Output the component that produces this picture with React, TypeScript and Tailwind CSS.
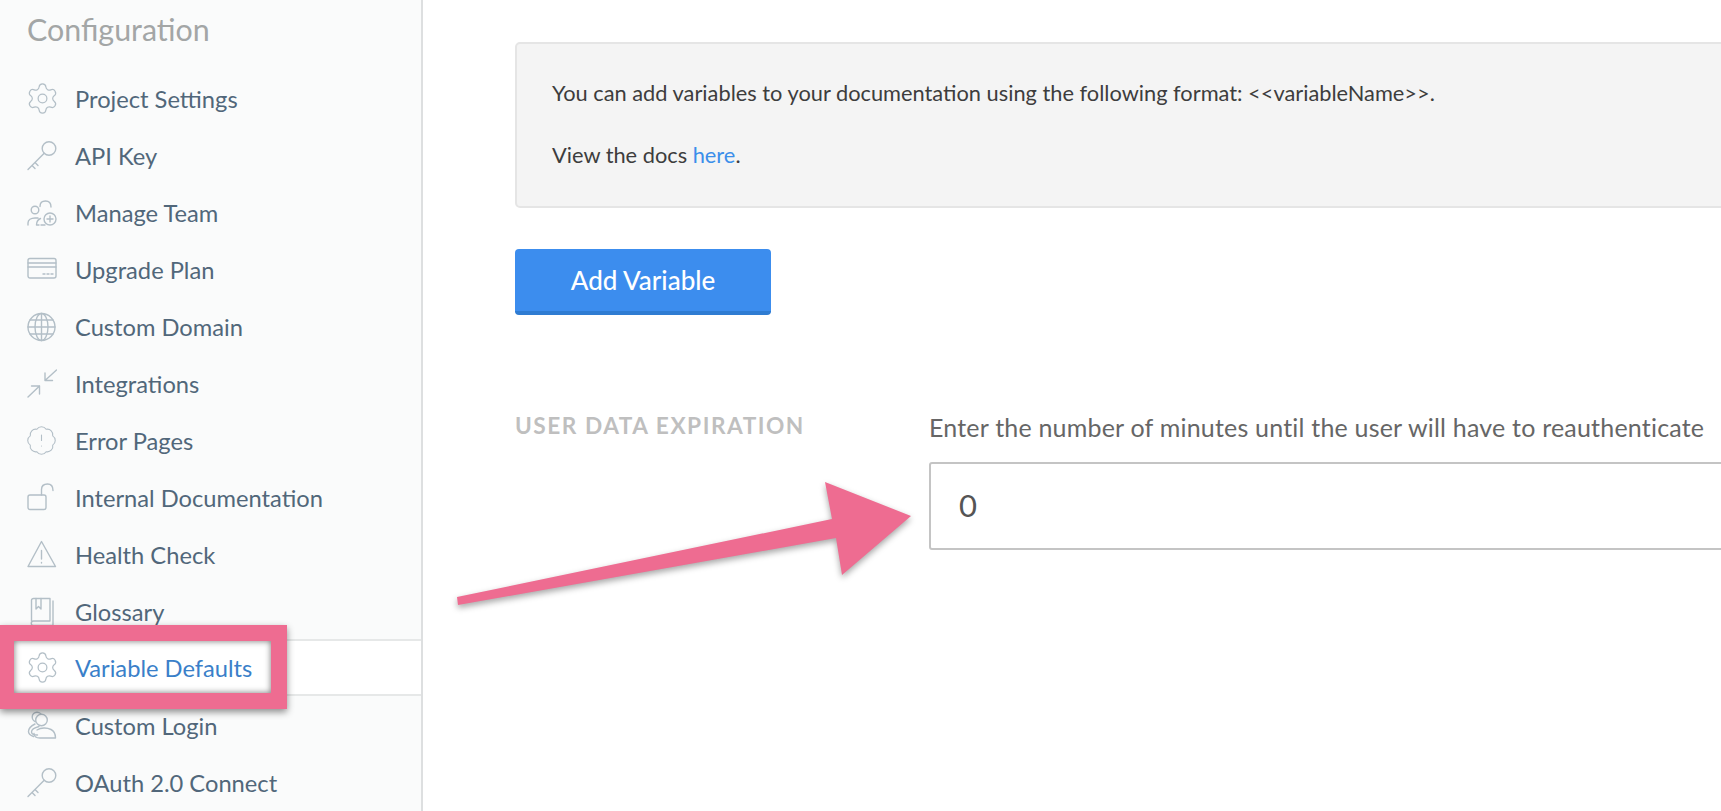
import React from "react";
import { Settings, BadgeAlert } from "lucide-react";

const ic = "#b3bfc7";

function Svg({ children }: { children: React.ReactNode }) {
  return (
    <svg width="30" height="30" viewBox="0 0 30 30" fill="none" stroke={ic} strokeWidth="1.4" strokeLinecap="round" strokeLinejoin="round" className="shrink-0">
      {children}
    </svg>
  );
}

const Gear = () => <Settings size={35} strokeWidth={0.85} color={ic} className="shrink-0 -mx-[2.5px]" />;
const Key = () => (
  <Svg>
    <circle cx="22" cy="7.5" r="6.8" />
    <path d="M17.2 12.3 1 28.5M5 24.500l3 3M8 21.500l3 3" />
  </Svg>
);
const Team = () => (
  <Svg>
    <circle cx="8" cy="12" r="3.8" />
    <path d="M1 27v-2c0-3 3-5 7-5h3M12 27H9.500c0-3.500 1.500-5.500 4-6.500M13 8.500C13 4 16 3 18.500 3S24 4.500 24 9M14 27h4" />
    <circle cx="23" cy="21" r="6" />
    <path d="M23 18v6M20 21h6" />
  </Svg>
);
const Card = () => (
  <Svg>
    <rect x="1" y="3.5" width="28" height="19.5" rx="2" />
    <path d="M1 8h28M1 12h28M16 19h2M20 19h2M24 19h2" />
  </Svg>
);
const Globe = () => (
  <Svg>
    <circle cx="14.5" cy="15" r="13.5" />
    <ellipse cx="14.5" cy="15" rx="6.5" ry="13.5" />
    <path d="M14.500 1.500v27M1 15h27M3 8h23M3 22h23" />
  </Svg>
);
const Arrows = () => (
  <Svg>
    <path d="M29.500 1 18 11.500M18 4v7.500h7.500M1 28l11.500-11M4.500 17h8v8" />
  </Svg>
);
const ErrorIcon = () => <BadgeAlert size={33} strokeWidth={0.8} color={ic} className="shrink-0 -mx-[1.5px] -translate-x-[1px]" />;
const Lock = () => (
  <Svg>
    <rect x="1" y="12" width="18" height="14.5" rx="2" />
    <path d="M14.500 12V6.500C14.500 3 17 1 20.500 1S26 3 26 7.500" />
  </Svg>
);
const Warn = () => (
  <Svg>
    <path d="M14.500 1.500 1 26.500h27.500z" />
    <path d="M14.500 10.500v8.500M14.500 22.500v.5" />
  </Svg>
);
const Book = () => (
  <Svg>
    <path d="M4.500 24V3.500a2 2 0 0 1 2-2H23v22.500H6.500a2 2 0 0 0 0 4.500H26V4" />
    <path d="M9 1.500v10.500l2.500-2.500L14 12V1.500" />
  </Svg>
);
const Login = () => (
  <Svg>
    <circle cx="10" cy="6" r="4.8" />
    <circle cx="14.500" cy="9" r="5.800" fill="#fafbfb" />
    <path d="M8 13C4 15 1.500 18 1.500 20.500c0 2 2 4 5 5M12 15.500c-4 1-7.500 3-7.500 5.500 0 2.500 3 3 6 3" />
    <path d="M10 19c4-2.500 10-2.500 14-.5 3 1.500 4.500 4.500 4.500 8.500H13c-4 0-6.500-2-6-4.500" />
  </Svg>
);

const items: [string, () => React.ReactElement][] = [
  ["Project Settings", Gear],
  ["API Key", Key],
  ["Manage Team", Team],
  ["Upgrade Plan", Card],
  ["Custom Domain", Globe],
  ["Integrations", Arrows],
  ["Error Pages", ErrorIcon],
  ["Internal Documentation", Lock],
  ["Health Check", Warn],
  ["Glossary", Book],
];
const after: [string, () => React.ReactElement][] = [
  ["Custom Login", Login],
  ["OAuth 2.0 Connect", Key],
];

function Row({ label, Icon }: { label: string; Icon: () => React.ReactElement }) {
  return (
    <div className="flex h-[57px] items-center gap-[18px] pl-[27px] text-[#51677a]">
      <Icon />
      <span className="pt-[2px]">{label}</span>
    </div>
  );
}

export default function App() {
  return (
    <div className="relative flex h-[811px] w-[1721px] overflow-hidden bg-white font-['Lato','Liberation_Sans',sans-serif]">
      <aside className="h-full w-[423px] shrink-0 border-r-2 border-[#dddfe0] bg-[#fafbfb] text-[23.7px]">
        <div className="h-[70px] pl-[27px] pt-[10px] text-[30.4px] leading-[38px] text-[#a3a6a6]">Configuration</div>
        {items.map(([l, I]) => (
          <Row key={l} label={l} Icon={I} />
        ))}
        <div className="-mt-px mb-px flex h-[57px] items-center gap-[18px] border-y-2 border-[#e6e8e8] bg-white pl-[27px] text-[#3a7fc9]">
          <Gear />
          <span className="pt-[3px]">Variable Defaults</span>
        </div>
        {after.map(([l, I]) => (
          <Row key={l} label={l} Icon={I} />
        ))}
      </aside>

      <main className="min-w-0 flex-1 pl-[92px] pt-[42px]">
        <div className="-mr-4 flex h-[166px] flex-col gap-[34px] rounded-[5px] border-2 border-[#e5e5e5] bg-[#f4f4f4] pl-[35px] pt-[35px] text-[21.8px] leading-[28px] text-[#3d3d3d]">
          <p>You can add variables to your documentation using the following format: &lt;&lt;variableName&gt;&gt;.</p>
          <p>
            View the docs <span className="text-[#3b8eea]">here</span>.
          </p>
        </div>
        <button className="mt-[41px] block h-[66px] w-[256px] rounded-[4px] border-b-4 border-[#2f7cd2] bg-[#3c8dee] text-[26px] font-medium text-white">
          Add Variable
        </button>
        <section className="mt-[98px] flex">
          <h3 className="-mt-px h-[28px] w-[414px] shrink-0 text-[22.7px] leading-[28px] font-bold tracking-[1.5px] text-[#bfbfbf]">USER DATA EXPIRATION</h3>
          <div className="min-w-0 flex-1">
            <p className="text-[25px] leading-[28px] tracking-[0.2px] text-[#666666]">Enter the number of minutes until the user will have to reauthenticate</p>
            <div className="-mr-4 mt-[21px] flex h-[88px] items-center rounded-[3px] border-2 border-[#c4c4c4] pb-[2px] pl-[28px] text-[31px] text-[#555555]">0</div>
          </div>
        </section>
      </main>

      <div className="absolute left-0 top-[625px] h-[84px] w-[287px] border-y-[16px] border-l-[14px] border-r-[16px] border-[#ee6c91] shadow-[0_3px_7px_rgba(0,0,0,0.45),inset_0_0_6px_rgba(0,0,0,0.55)]" />

      <svg className="absolute left-[440px] top-[470px] drop-shadow-[0_3px_3px_rgba(0,0,0,0.35)]" width="490" height="140" viewBox="440 470 490 140">
        <polygon points="457,597 832,519 825,482 911,516 842,575 836,538 458,605" fill="#ee6c91" />
      </svg>
    </div>
  );
}
